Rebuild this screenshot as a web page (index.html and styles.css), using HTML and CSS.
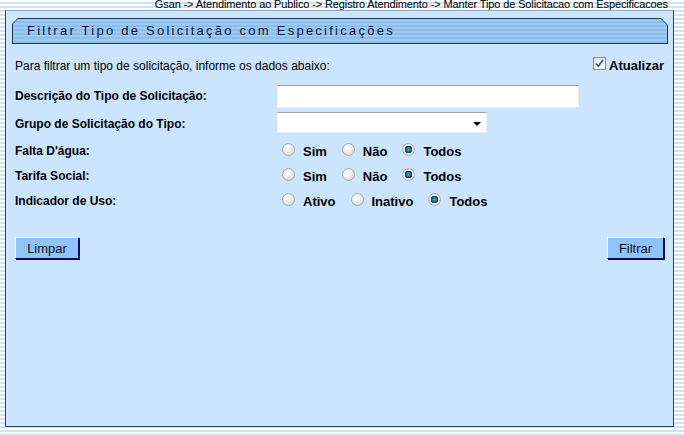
FILE: index.html
```html
<!DOCTYPE html>
<html lang="pt">

<head>
    <meta charset="UTF-8">
    <title>Filtrar Tipo de Solicitação com Especificações</title>
    <link rel="stylesheet" href="styles.css">
</head>

<body>
    <div class="trilha">Gsan -&gt; Atendimento ao Publico -&gt; Registro Atendimento -&gt; Manter Tipo de Solicitacao com Especificacoes</div>
    <div class="painel">
        <div class="titulo">
            <div class="titulo-in">Filtrar Tipo de Solicitação com Especificações</div>
        </div>
        <div class="intro">
            <span>Para filtrar um tipo de solicitação, informe os dados abaixo:</span>
            <label class="atualizar">
                <span class="check"><svg width="11" height="11" viewBox="0 0 11 11"><path d="M2 5.5 L4.3 8 L9 2" fill="none" stroke="#4a5a8c" stroke-width="1.8"/></svg></span>
                Atualizar
            </label>
        </div>
        <div class="linha alta">
            <div class="rotulo">Descrição do Tipo de Solicitação:</div>
            <input class="campo" type="text">
        </div>
        <div class="linha alta">
            <div class="rotulo">Grupo de Solicitação do Tipo:</div>
            <div class="combo"><span class="seta"></span></div>
        </div>
        <div class="linha">
            <div class="rotulo">Falta D'água:</div>
            <div class="opcoes">
                <span class="radio"></span><span class="op">Sim</span>
                <span class="radio"></span><span class="op">Não</span>
                <span class="radio marcado"></span><span class="op">Todos</span>
            </div>
        </div>
        <div class="linha">
            <div class="rotulo">Tarifa Social:</div>
            <div class="opcoes">
                <span class="radio"></span><span class="op">Sim</span>
                <span class="radio"></span><span class="op">Não</span>
                <span class="radio marcado"></span><span class="op">Todos</span>
            </div>
        </div>
        <div class="linha">
            <div class="rotulo">Indicador de Uso:</div>
            <div class="opcoes">
                <span class="radio"></span><span class="op">Ativo</span>
                <span class="radio"></span><span class="op">Inativo</span>
                <span class="radio marcado"></span><span class="op">Todos</span>
            </div>
        </div>
        <div class="botoes">
            <button class="botao limpar">Limpar</button>
            <button class="botao filtrar">Filtrar</button>
        </div>
    </div>
</body>

</html>
```

FILE: styles.css
```css
body {
    margin: 0;
    font-family: "Liberation Sans", Arial, sans-serif;
    background: repeating-linear-gradient(to bottom, #ffffff 0, #ffffff 2px, #cde3f4 2px, #cde3f4 4px);
    height: 436px;
    overflow: hidden;
}

.trilha {
    height: 10px;
    line-height: 8px;
    font-size: 11px;
    text-align: right;
    padding-right: 16px;
    color: #000;
    letter-spacing: -0.12px;
}

.painel {
    box-sizing: border-box;
    width: 669px;
    height: 417px;
    margin-left: 5px;
    background: #cce5fe;
    border: 1px solid #2f4257;
    border-top-color: #8fa9c2;
}

.titulo {
    margin: 7px 5px 0 6px;
    height: 26px;
    background: #24364a;
    clip-path: polygon(6px 0, calc(100% - 7px) 0, 100% 7px, 100% 100%, 0 100%, 0 6px);
}

.titulo-in {
    box-sizing: border-box;
    height: 24px;
    margin: 0 1px;
    position: relative;
    top: 1px;
    background: repeating-linear-gradient(to bottom, #9ecaf3 0, #9ecaf3 2px, #8dbdec 2px, #8dbdec 4px);
    clip-path: polygon(5px 0, calc(100% - 6px) 0, 100% 6px, 100% 100%, 0 100%, 0 5px);
    font-size: 13px;
    letter-spacing: 2.25px;
    line-height: 24px;
    padding-left: 14px;
    color: #141432;
}

.intro {
    display: flex;
    justify-content: space-between;
    align-items: center;
    height: 24px;
    margin-top: 10px;
    padding: 0 9px;
    font-size: 12px;
}

.atualizar {
    display: flex;
    align-items: center;
    font-size: 13px;
    font-weight: bold;
    margin-top: -2px;
}

.check {
    box-sizing: border-box;
    width: 13px;
    height: 13px;
    margin-right: 3px;
    margin-top: -4px;
    border: 1px solid #8b8b8b;
    background: linear-gradient(135deg, #e4e4e4, #ffffff);
    display: flex;
    align-items: center;
    justify-content: center;
}

.linha {
    display: flex;
    align-items: center;
    height: 25px;
    padding-left: 9px;
}

.linha.alta {
    height: 28px;
}

.intro + .linha {
    margin-top: 4px;
}

.rotulo {
    width: 262px;
    font-size: 12px;
    font-weight: bold;
}

.campo {
    box-sizing: border-box;
    width: 302px;
    height: 23px;
    margin: 0;
    border: 1px solid #e6eef6;
    border-top-color: #a4a4a4;
    background: #fff;
}

.combo {
    box-sizing: border-box;
    width: 210px;
    height: 21px;
    margin-top: -3px;
    border: 1px solid #e6eef6;
    border-top-color: #a4a4a4;
    background: #fff;
    display: flex;
    justify-content: flex-end;
    align-items: center;
    padding-right: 5px;
}

.seta {
    width: 0;
    height: 0;
    border-left: 4px solid transparent;
    border-right: 4px solid transparent;
    border-top: 4px solid #000;
    margin-top: 2px;
}

.opcoes {
    display: flex;
    align-items: center;
    padding-left: 5px;
}

.radio {
    box-sizing: border-box;
    width: 13px;
    height: 13px;
    border-radius: 50%;
    border: 1px solid #a9a9a9;
    background: radial-gradient(circle at 40% 35%, #ffffff 0, #f2f2f2 35%, #cfcfcf 100%);
    margin-top: -2px;
}

.radio.marcado {
    background: radial-gradient(circle at 50% 50%, #5fb0d8 0, #1f6b98 2px, #143d5c 3.5px, #e2e2e2 4px, #f6f6f6 100%);
}

.op {
    font-size: 13px;
    font-weight: bold;
    margin: 0 15px 0 8px;
    padding-top: 1px;
}

.botoes {
    display: flex;
    justify-content: space-between;
    margin-top: 24px;
    padding: 0 9px;
}

.botao {
    box-sizing: border-box;
    height: 22px;
    padding: 0;
    font-family: "Liberation Sans", Arial, sans-serif;
    font-size: 13px;
    color: #111;
    background: #90c3f8;
    border: 1px solid #ffffff;
    border-right-color: #0a0a5a;
    border-bottom-color: #0a0a5a;
    box-shadow: 1px 1px 0 #0a0a5a;
}

.limpar {
    width: 64px;
}

.filtrar {
    width: 57px;
}
```
